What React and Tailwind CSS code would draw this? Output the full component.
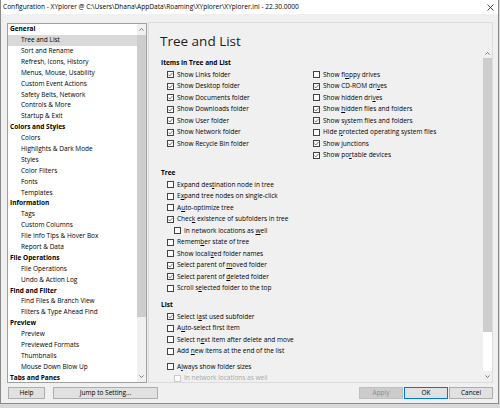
import React from 'react'

const nav = [
  ['General', true],
  ['Tree and List'],
  ['Sort and Rename'],
  ['Refresh, Icons, History'],
  ['Menus, Mouse, Usability'],
  ['Custom Event Actions'],
  ['Safety Belts, Network'],
  ['Controls & More'],
  ['Startup & Exit'],
  ['Colors and Styles', true],
  ['Colors'],
  ['Highlights & Dark Mode'],
  ['Styles'],
  ['Color Filters'],
  ['Fonts'],
  ['Templates'],
  ['Information', true],
  ['Tags'],
  ['Custom Columns'],
  ['File Info Tips & Hover Box'],
  ['Report & Data'],
  ['File Operations', true],
  ['File Operations'],
  ['Undo & Action Log'],
  ['Find and Filter', true],
  ['Find Files & Branch View'],
  ['Filters & Type Ahead Find'],
  ['Preview', true],
  ['Preview'],
  ['Previewed Formats'],
  ['Thumbnails'],
  ['Mouse Down Blow Up'],
  ['Tabs and Panes', true],
]

const itemsLeft = [
  ['Show Links folder', 1],
  ['Show Desktop folder', 1],
  ['Show Documents folder', 1],
  ['Show Downloads folder', 1],
  ['Show User folder', 1],
  ['Show Network folder', 1],
  ['Show Recycle Bin folder', 1],
]

const itemsRight = [
  ['Show fl&oppy drives', 0],
  ['Show CD-ROM dri&ves', 1],
  ['Show hidden dri&ves', 0],
  ['Show &hidden files and folders', 1],
  ['Show s&ystem files and folders', 1],
  ['Hide &protected operating system files', 0],
  ['Show &junctions', 1],
  ['Show po&rtable devices', 1],
]

const tree = [
  ['Expand des&tination node in tree', 0],
  ['E&xpand tree nodes on single-click', 0],
  ['A&uto-optimize tree', 0],
  ['Chec&k existence of subfolders in tree', 1],
  ['In network locations as &well', 0, 'sub'],
  ['Remem&ber state of tree', 0],
  ['Show locali&zed folder names', 0],
  ['Select parent of &moved folder', 1],
  ['Select parent of &deleted folder', 1],
  ['Scroll s&elected folder to the top', 0],
]

const list = [
  ['Select l&ast used subfolder', 1],
  ['A&uto-select first item', 0],
  ['Select n&ext item after delete and move', 0],
  ['Add &new items at the end of the list', 0],
]

function Mn({ text }) {
  const i = text.indexOf('&')
  if (i < 0) return text
  return (
    <>
      {text.slice(0, i)}
      <u className="underline-offset-[1px]">{text[i + 1]}</u>
      {text.slice(i + 2)}
    </>
  )
}

function Box({ on, off }) {
  return (
    <span className={`w-[7px] h-[7px] border bg-white flex items-center justify-center shrink-0 ${off ? 'border-[#cccccc]' : 'border-[#444444]'}`}>
      {on ? (
        <svg width="5" height="5" viewBox="0 0 5 5">
          <path d="M0.3 2.5 L1.8 4 L4.7 0.8" fill="none" stroke="#555" strokeWidth="0.8" />
        </svg>
      ) : null}
    </span>
  )
}

function Check({ label, on, sub, off }) {
  return (
    <div className={`h-[11.5px] flex items-center gap-[3px] whitespace-nowrap ${sub ? 'pl-[13px]' : 'pl-[6px]'} ${off ? 'text-[#a8a8a8]' : 'text-black'}`}>
      <Box on={on} off={off} />
      <span><Mn text={label} /></span>
    </div>
  )
}

function Head({ children, className = '' }) {
  return <div className={`h-[12px] flex items-center font-bold ${className}`}>{children}</div>
}

function Chev({ down }) {
  return (
    <svg width="5" height="3" viewBox="0 0 5 3">
      <path d={down ? 'M0.4 0.4 L2.5 2.5 L4.6 0.4' : 'M0.4 2.6 L2.5 0.5 L4.6 2.6'} fill="none" stroke="#606060" strokeWidth="0.8" />
    </svg>
  )
}

function Btn({ children, ok, disabled, className = '' }) {
  return (
    <div
      className={`h-[12px] flex items-center justify-center border ${ok ? 'border-[#0078d7] bg-[#e1e1e1]' : disabled ? 'border-[#bfbfbf] bg-[#cccccc] text-[#8a8a8a]' : 'border-[#adadad] bg-[#e1e1e1]'} ${className}`}
    >
      {children}
    </div>
  )
}

export default function App() {
  return (
    <div className="w-[500px] h-[408px] bg-[#d8d8d8] overflow-hidden font-['Open_Sans',sans-serif] text-[6.5px] leading-none text-black">
      <div className="w-[499px] h-[404px] bg-[#f0f0f0] border-x border-b border-[#8a8a8a] flex flex-col">
        {/* title bar */}
        <div className="h-[14px] bg-white flex items-center justify-between pl-[2px] pr-[4px] text-[6.6px] shrink-0">
          <span className="whitespace-nowrap">{'Configuration - XYplorer @ C:\\Users\\Dhana\\AppData\\Roaming\\XYplorer\\XYplorer.ini - 22.30.0000'}</span>
          <svg width="7" height="7" viewBox="0 0 7 7">
            <path d="M0.5 0.5 L6.5 6.5 M6.5 0.5 L0.5 6.5" stroke="#222" strokeWidth="0.8" />
          </svg>
        </div>

        <div className="flex items-start pt-[8px] shrink-0">
          {/* left nav */}
          <div className="ml-[6px] mt-[1px] w-[140px] h-[360px] border border-[#a0a0a0] bg-white flex">
            <div className="flex-1 overflow-hidden">
              {nav.map(([t, bold], i) => (
                <div
                  key={i}
                  className={`h-[10.9px] flex items-center whitespace-nowrap ${bold ? 'font-bold pl-[2px]' : 'pl-[13px]'} ${i === 1 ? 'bg-[#d9d9d9]' : ''}`}
                >
                  {t}
                </div>
              ))}
            </div>
            <div className="w-[9px] bg-[#f0f0f0] flex flex-col">
              <div className="h-[10px] flex items-center justify-center"><Chev /></div>
              <div className="h-[282px] mt-[1px] bg-[#cdcdcd]" />
              <div className="flex-1" />
              <div className="h-[11px] flex items-center justify-center"><Chev down /></div>
            </div>
          </div>

          {/* right panel */}
          <div className="ml-[1px] w-[345px] h-[361px] border border-[#dcdcdc] flex flex-col">
            <div className="h-[25px] pt-[11px] pl-[11px] text-[13.5px] leading-[14px] text-[#1e1e1e] shrink-0">Tree and List</div>
            <div className="flex-1 flex min-h-0">
              <div className="flex-1 overflow-hidden pl-[12px] pt-[9px]">
                <Head>Items in Tree and List</Head>
                <div className="flex">
                  <div className="w-[146px]">
                    {itemsLeft.map(([t, on]) => <Check key={t} label={t} on={on} />)}
                  </div>
                  <div>
                    {itemsRight.map(([t, on]) => <Check key={t} label={t} on={on} />)}
                  </div>
                </div>

                <Head className="mt-[6px]">Tree</Head>
                {tree.map(([t, on, sub]) => <Check key={t} label={t} on={on} sub={sub} />)}

                <Head className="mt-[5px]">List</Head>
                {list.map(([t, on]) => <Check key={t} label={t} on={on} />)}

                <div className="mt-[4px]">
                  <Check label="A&lways show folder sizes" on={0} />
                  <Check label="In network locations as well" on={0} sub off />
                </div>
              </div>
              <div className="w-[9px] flex flex-col">
                <div className="h-[10px] flex items-center justify-center"><Chev /></div>
                <div className="h-[274px] bg-[#cdcdcd]" />
                <div className="flex-1 bg-white" />
                <div className="h-[11px] flex items-center justify-center"><Chev down /></div>
              </div>
            </div>
          </div>
        </div>

        {/* buttons */}
        <div className="flex mt-[4px]">
          <Btn className="ml-[7px] w-[37px]">Help</Btn>
          <Btn className="ml-[8px] w-[105px]">Jump to Setting...</Btn>
          <div className="ml-auto mr-[5px] flex gap-[1px]">
            <Btn disabled className="w-[44px]">Apply</Btn>
            <Btn ok className="w-[44px]">OK</Btn>
            <Btn className="w-[44px]">Cancel</Btn>
          </div>
        </div>
      </div>
    </div>
  )
}
